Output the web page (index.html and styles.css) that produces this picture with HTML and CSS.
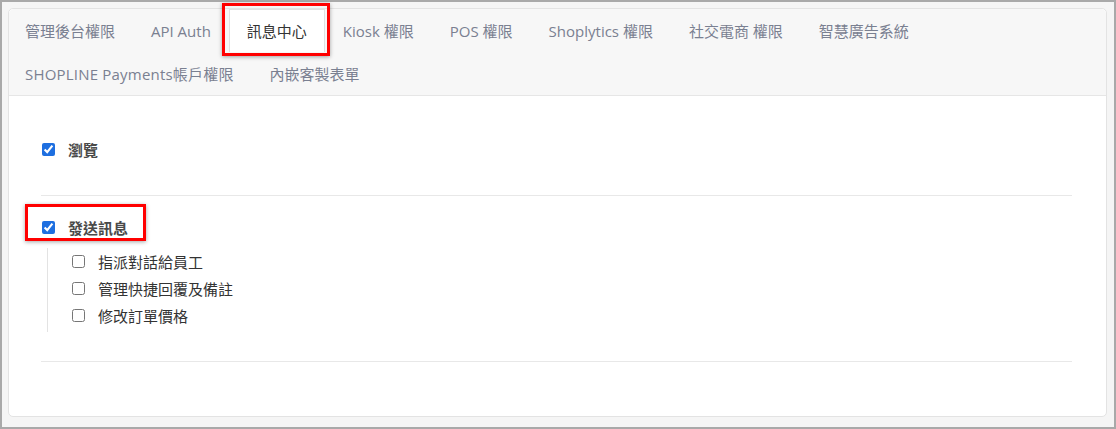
FILE: index.html
```html
<!DOCTYPE html>
<html lang="zh-Hant">
<head>
<meta charset="utf-8">
<link rel="stylesheet" href="styles.css">
</head>
<body>
<div class="frame">
  <div class="panel">
    <ul class="tabs">
      <li class="tab">管理後台權限</li>
      <li class="tab">API Auth</li>
      <li class="tab active">訊息中心</li>
      <li class="tab">Kiosk 權限</li>
      <li class="tab">POS 權限</li>
      <li class="tab">Shoplytics 權限</li>
      <li class="tab">社交電商 權限</li>
      <li class="tab">智慧廣告系統</li>
      <li class="tab wide">SHOPLINE Payments帳戶權限</li>
      <li class="tab">內嵌客製表單</li>
    </ul>
    <div class="content">
      <div class="section first">
        <label class="row main"><input type="checkbox" checked><span>瀏覽</span></label>
      </div>
      <div class="section second">
        <label class="row main marked"><input type="checkbox" checked><span>發送訊息</span></label>
        <div class="sublist">
          <label class="row sub"><input type="checkbox"><span>指派對話給員工</span></label>
          <label class="row sub"><input type="checkbox"><span>管理快捷回覆及備註</span></label>
          <label class="row sub"><input type="checkbox"><span>修改訂單價格</span></label>
        </div>
      </div>
    </div>
  </div>
</div>
</body>
</html>
```
FILE: styles.css
```css
* { box-sizing: border-box; }
html, body { margin: 0; padding: 0; }
body {
  font-family: "Open Sans", "Noto Sans CJK TC", sans-serif;
  background: #f5f5f5;
}
.frame {
  width: 1116px;
  height: 429px;
  border: 2px solid #a9a9a9;
  padding: 6px 7px 10px 6px;
  background: #f5f5f5;
}
.panel {
  height: 100%;
  background: #fff;
  border: 1px solid #e3e3e3;
  border-radius: 5px;
}
.tabs {
  list-style: none;
  margin: 0;
  padding: 0 0 0 0;
  display: flex;
  flex-wrap: wrap;
  background: #f7f7f7;
  border-bottom: 1px solid #e6e6e6;
  border-radius: 5px 5px 0 0;
}
.tab {
  position: relative;
  height: 43px;
  line-height: 43px;
  padding: 0 17px 0 17px;
  border: 1px solid transparent;
  border-bottom: 0;
  font-size: 15px;
  color: #7a8091;
  white-space: nowrap;
}
.tab:first-child,
.tab.wide {
  padding-left: 15px;
}
.tab.wide {
  letter-spacing: 0.2px;
}
.tab.active {
  background: #fff;
  color: #333;
  border-color: #e0e0e0;
}
.tab.active::after {
  content: "";
  position: absolute;
  left: -8px;
  right: -6px;
  top: -7px;
  bottom: -4px;
  border: 3px solid #ff0000;
  box-shadow: 0 1px 4px rgba(0, 0, 0, 0.35);
}
.content {
  padding: 0 34px 0 32px;
}
.section {
  border-bottom: 1px solid #e8e8e8;
}
.section.first {
  padding: 43px 0 36px;
}
.section.second {
  padding: 21px 0 29px;
}
.row {
  display: flex;
  align-items: center;
  height: 20px;
  font-size: 15px;
}
.row input {
  margin: 0 13px 0 1px;
  width: 13px;
  height: 13px;
  accent-color: #1e6fe0;
}
.row.main {
  font-weight: 700;
  color: #4a4a4a;
  width: max-content;
  position: relative;
}
.row.main.marked::after {
  content: "";
  position: absolute;
  left: -16px;
  right: -18px;
  top: -13px;
  bottom: -4px;
  border: 3px solid #ff0000;
  box-shadow: 0 1px 4px rgba(0, 0, 0, 0.35);
}
.sublist {
  margin: 11px 0 0 6px;
  border-left: 1px solid #e3e3e3;
  padding: 0 0 3px 23px;
}
.row.sub {
  height: 27px;
  color: #333;
}
```
